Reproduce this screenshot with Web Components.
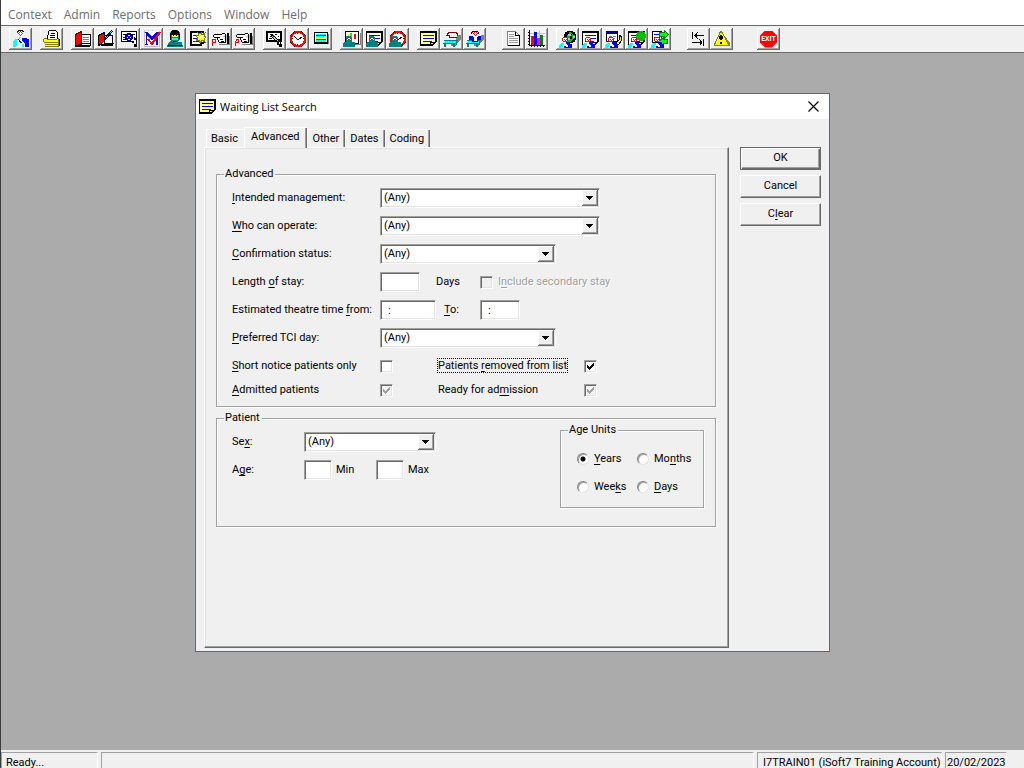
<!DOCTYPE html>
<html lang="en">
<head>
<meta charset="utf-8">
<title>Waiting List Search</title>
<style>
html, body { height: 100%; }
body { margin: 0; overflow: hidden; background: #ababab; }
</style>
</head>
<body>
<pas-app></pas-app>

<script>
// "_Intended" -> the letter after the underscore is the access key
function mnemonic(text) {
  return (text || "").replace(/_(.)/, "<u>$1</u>")
}

const base = /*css*/`
* { box-sizing: border-box; }
[hidden] { display: none; }
u { text-underline-offset: 2px; text-decoration-thickness: 1px; }
label, legend { white-space: nowrap; }
input, select, button { font: inherit; color: inherit; margin: 0; border-radius: 0; }
input[type=text], .combo {
  height: 20px;
  background: #fff;
  border: 1px solid;
  border-color: #a0a0a0 #fff #fff #a0a0a0;
  box-shadow: inset 1px 1px #696969, inset -1px -1px #e3e3e3;
  padding: 0 4px;
  outline: 0;
}
.combo { position: relative; display: block; padding: 0; }
.combo select {
  appearance: none;
  width: 100%;
  height: 18px;
  padding: 0 20px 0 3px;
  border: 0;
  background: none;
  outline: 0;
}
.combo svg {
  position: absolute;
  top: 1px;
  right: 1px;
  width: 16px;
  height: 16px;
  background: #f0f0f0;
  box-shadow: inset -1px -1px #696969, inset 1px 1px #fff, inset -2px -2px #a0a0a0;
  pointer-events: none;
}
input[type=checkbox] {
  appearance: none;
  flex: none;
  width: 13px;
  height: 13px;
  background: #fff;
  border: 1px solid;
  border-color: #a0a0a0 #fff #fff #a0a0a0;
  box-shadow: inset 1px 1px #696969, inset -1px -1px #e3e3e3;
}
.tick { position: relative; display: flex; color: #000; }
.tick svg { position: absolute; top: 3px; left: 3px; display: none; pointer-events: none; }
.tick input:checked + svg { display: block; }
.tick.grey { color: #a0a0a0; }
.tick.grey input { background: #f4f4f4; }
`

const tickSvg = `<svg width="7" height="7" viewBox="0 0 7 7" shape-rendering="crispEdges"><path fill="currentColor" d="M0 2h1v1h1v1h1v-1h1v-1h1v-1h1v-1h1v3h-1v1h-1v1h-1v1h-1v1h-1v-1h-1v-1h-1z"/></svg>`

/* ---------- toolbar pictures, 18 x 18 ---------- */

const person = `<path fill="#fff" d="M5 4h5v5H5z"/><path fill="#f00" d="M5 3h1v1h-1zM7 3h1v1h-1zM9 3h1v1h-1zM4 4h1v1h-1zM6 4h1v1h-1zM8 4h1v1h-1zM5 5h1v1h-1zM9 5h1v1h-1zM6 6h1v1h-1zM8 6h1v1h-1zM7 7h1v1h-1z"/>`
const miniPerson = `<g transform="translate(0 7)"><path fill="#0ff" d="M2 6h3v1l-2 4H0V9z"/><path fill="#00f" d="M8 5h3v2h2v4H8V8H6V6z"/><path fill="#fff" d="M5 6h2l2 3-2 2H4z"/><path fill="#00f" d="M6 8l2 3H5z"/><path fill="#fff" d="M4 1h4v4H4z"/><path fill="#f00" d="M4 0h4v1H4zM3 1h1v3H3zM8 1h1v3H8zM4 4h4v1H4zM5 2h1v1H5zM7 2h1v1H7zM6 3h1v1H6z"/></g>`
const bust = `<g transform="translate(0 6)"><path fill="#008080" d="M3 0h5v1h1v5h2l1 1v4H0V7l1-1h2z"/><path fill="#fff" d="M4 2h4v2H4z"/><path fill="#f00" d="M4 2h1v1H4zM7 2h1v1H7zM5 3h2v1H5z"/></g>`
const note = `<path fill="#fff" d="M1 2h15v10l-3 3H1z"/><path d="M0 1h17v11h-2V3H1v11h9v2H0zM10 12h6v1h-1v1h-1v1h-1v1h-3z"/><path fill="#fff" d="M11 13h2v1h-2z"/><path fill="#00f" d="M3 5h11v1H3zM3 8h11v1H3zM3 11h9v1H3z"/>`
const clock = `<circle cx="9" cy="9" r="7" fill="#fff" stroke="#000" stroke-width="3"/><circle cx="9" cy="9" r="7" fill="#fff" stroke="#f00" stroke-width="2"/><path stroke="#000" fill="none" d="M5 6l4 4 4-3"/><path d="M8 3h1v1H8zM8 14h1v1H8zM3 8h1v1H3zM14 8h1v1h-1z"/>`
const bed = `<path fill="#808080" d="M7 15l5-4 3-6h3v4l-4 5-2 3z"/><path fill="#0ff" d="M2 11h12l-2 3H1z"/><path fill="#008080" d="M1 10h14v1H1zM0 13h12v1H0zM1 14h2v3H1zM10 14h2v3h-2zM13 11h1v4h-1z"/>`
const hand = `<path fill="#808080" d="M7 14h10v1H7zM17 6h1v9h-1z"/><path fill="#fff" d="M2 5h10v8H7L5 8H2z"/><path d="M2 4h8v1H2zM1 5h1v2H1zM2 7h6v1H2zM5 8h1v2H5zM6 10h1v2H6zM7 12h6v1H7zM10 3h3v1h-3zM13 4h1v9h-1zM8 9h3v1H8zM9 11h3v1H9zM15 3h2v11h-2z"/><path fill="#c0c0c0" d="M11 6h2v1h-2zM14 5h1v7h-1z"/>`

const icons = {
  doctor: `<path fill="#0ff" d="M3 9h3v3l-2 5H1v-5z"/><path fill="#00f" d="M10 8h5v1h2v8h-4v-4l-3-2z"/><path fill="#fff" d="M5 10h5l3 4v3H5z"/><path fill="#00f" d="M6 9l4 3-1 2zM14 12h1v5h-1z"/><path fill="#000" d="M6 0h5v1H6zM5 1h1v1H5zM11 1h1v1h-1z"/><g transform="translate(1 -2)">${person}</g><path fill="#0ff" d="M7 7h1v2H7zM10 14h2v3h-2z"/>`,
  tray: `<path fill="#fff" d="M5 1h9v9H4z"/><path d="M6 0h7v1H6zM5 1h1v4H5zM13 1h1v1h-1zM14 2h1v7h-1zM4 5h1v4H4zM8 3h4v1H8zM7 5h5v1H7zM7 7h5v1H7z"/><path fill="#ff0" d="M1 9h15v7H2z"/><path fill="#808000" d="M1 8h3v1H1zM0 9h1v3H0zM4 9h10v1H4zM1 12h14v1H1zM2 14h13v1H2zM2 16h14v1H2zM15 8h1v9h-1z"/><path d="M16 9h1v7h-1z"/>`,
  book: `<path fill="#fff" stroke="#000" d="M4.500 4.500h12v11h-12z"/><path stroke="#808080" d="M9 7.500h6M9 9.500h6M9 11.500h6"/><path fill="#f00" stroke="#800000" d="M1.500 4.500l6-3v12l-6 3z"/><path d="M1 15h3l4-2h8v1H9l-3 2h10v1H1z"/>`,
  bookPen: `<path fill="#fff" stroke="#000" d="M6.500 5.500h9v9h-9z"/><path fill="#f00" stroke="#000" d="M1.500 5.500l6-3v10l-6 3z"/><path d="M3 16l5-3h9l-1 3H4z"/><path fill="#0ff" stroke="#000080" d="M14.500.500l1 1-6 7-1 1v-2z"/><path fill="#fff" d="M4 14l3-2v2zM11 11h4v1h-4z"/>`,
  inspect: `<path fill="#fff" stroke="#000" d="M1.500 1.500h15v10h-15z"/><path d="M3 4h3v1H3zM12 4h3v1h-3zM3 7h2v1H3zM3 9h3v1H3z"/><circle cx="9" cy="7" r="4" fill="#000080"/><path fill="#00f" d="M6 6h6v2H6z"/><path fill="#fff" d="M8 5h2v1H8zM7 7h1v1H7zM10 7h1v1h-1zM8 9h2v1H8z"/><path d="M10 12l4 1v4h3V9l-3-2v4z"/><path fill="#fff" d="M14 10h2v4h-2z"/>`,
  check: `<path fill="#fff" d="M1 1h16v15H1z"/><path fill="#c0c0c0" d="M1 0h1v16H1zM5 0h1v1H5zM9 0h1v1H9zM1 16h16v1H1zM16 1h1v16h-1z"/><path fill="#00f" d="M2 2h3l4 5 4-5h2v13h-2V6l-4 5-5-5v8h1v1H2v-1h1V3H2z"/><path fill="none" stroke="#f00" stroke-width="2" d="M5 9l4 5 8-12"/>`,
  surgeon: `<path fill="#008080" d="M6 0h6l2 3v6l-2 2v1h4l1 5H1l1-4 3-2V9L4 7V3z"/><path d="M5 1h1V0h5v1h2v3h1v5h-1V5H5v5H4V3h1z"/><path fill="#ff0" d="M6 5h6v2H6z"/><path d="M7 5h1v1H7zM10 5h1v1h-1z"/><path fill="#0ff" d="M6 8h6v2H6z"/><path d="M7 11h4v1H7zM2 15h14v1H2z"/>`,
  newNote: `<path fill="#fff" d="M2 2h13v13H2z"/><path d="M1 1h14v2H3v11h8v2H1zM11 12h4v2h-2v2h-2zM14 9h2v4h-2z"/><path fill="#00f" d="M4 5h4v1H4zM4 8h4v1H4zM4 11h6v1H4z"/><path fill="#ff0" stroke="#808000" d="M12 2l1 3 3-2-1 3 2 1-2 2 1 3-3-2-2 3-1-3-3 1 2-3-2-2 3-1-1-2 3 1z"/><path fill="#fff" d="M11 6h3v2h-3z"/>`,
  handRed: `${hand}<path fill="#f00" d="M0 9h4v1H0zM0 9h1v7H0zM3 9h1v4H0v-1h3z"/>`,
  handRed2: `${hand}<path fill="#f00" d="M1 9h3v1H1zM1 10h1v1H1zM0 11h1v5H0zM3 10h1v3H1v-1h2z"/>`,
  cardPen: `<path fill="#fff" stroke="#000" stroke-width="2" d="M1 2h14v9H1z"/><path d="M4 4h2v1H4zM6 5h2v1H6zM3 8h3v1H3zM9 4h2v1H9zM12 6h1v1h-1z"/><path stroke="#000" stroke-width="3" d="M5 5l8 7"/><path stroke="#c0c0c0" d="M6 6l6 5"/><path d="M12 9h2v2h1v3h1v3h-3v-2h-2v-3h1z"/><path fill="#fff" d="M13 12h1v2h-1z"/>`,
  clock,
  screen: `<path d="M2 2h14v12H2z"/><path fill="#808080" d="M4 14h13V4h-1v10z"/><path fill="#fff" d="M3 3h12v9H3z"/><path fill="#0ff" d="M4 4h10v1H4z"/><path fill="#00f" d="M4 5h10v1H4z"/><path fill="#0ff" d="M4 6h10v1H4z"/><path fill="#ff0" d="M4 7h10v2H4z"/><path fill="#f00" d="M4 9h10v1H4z"/><path fill="#0ff" d="M4 10h10v2H4z"/>`,
  bustChart: `<path fill="#fff" stroke="#000" d="M2.500 1.500h13v12h-13z"/><path fill="#808080" d="M4 14h13V3h1v12H4z"/><path fill="#ff0" d="M5 4h2v5H5z"/><path fill="#0f0" d="M7 3h2v6H7z"/><path fill="#f00" d="M11 4h2v5h-2z"/><path fill="#008080" d="M5 8h3v1H5z"/>${bust}`,
  bustNote: `${note}${bust}`,
  bustClock: `${clock}${bust}`,
  yellowNote: `<path fill="#ff9" d="M1 2h15v10l-4 3H1z"/><path d="M0 1h17v11h-2V3H1v11h9v2H0zM10 12h6v1h-1v1h-1v1h-1v1h-3z"/><path fill="#ff0" d="M11 13h2v1h-2z"/><path fill="#00f" d="M3 5h11v1H3zM3 8h11v1H3zM3 11h9v1H3z"/>`,
  bed: `${bed}<path fill="none" stroke="#800000" d="M4 6V3.500h1v-1h8v1h1V6M3 5.500h3v2h8"/>`,
  bedPerson: `${bed}<path fill="#00f" d="M3 6h4l2 3 2-3h4v4h-3v2H6v-2H3z"/><path fill="#fff" d="M8 7h3v4H8z"/><g transform="translate(2 -2)">${person}</g><path fill="#000080" d="M6 1h6v1H6zM5 2h1v2H5zM12 2h1v2h-1z"/>`,
  page: `<path fill="#fff" stroke="#808080" d="M2.500 1.500h8l4 4v10h-12z"/><path stroke="#000" fill="none" d="M10.500 1.500v4h4v10h-12"/><path stroke="#a0a0a0" d="M4 4.500h5M4 6.500h5M4 8.500h9M4 10.500h9M4 12.500h9"/>`,
  chart: `<path fill="#fff" d="M2 1h15v14H2z"/><path stroke="#c0c0c0" d="M2 3.500h15M2 6.500h15M6.500 1v14M11.500 1v14"/><path fill="#f00" d="M3 6h3v9H3z"/><path fill="#00f" d="M6 2h3v13H6z"/><path fill="#f0f" d="M9 8h3v7H9z"/><path fill="#008000" d="M12 5h3v10h-3z"/><path d="M1 0h1v15h15v1h-1v1h-1v-1h-2v1h-1v-1h-2v1H9v-1H7v1H6v-1H4v1H3v-1H1v-1H0v-1h1v-2H0v-1h1V9H0V8h1V6H0V5h1V3H0V2h1z"/>`,
  globe: `<circle cx="11" cy="7" r="6" fill="#00c000" stroke="#000"/><path d="M7 2h3v3H8v2H6zM12 2h3l2 3h-3zM11 6h2v3h-2zM14 9h2l-2 3h-2z"/><path fill="#c0c0c0" d="M9 4h3v2H9zM14 6h2v2h-2zM8 8h3v2H8z"/><path fill="#00f" d="M12 4h1v1h-1zM15 8h1v1h-1z"/>${miniPerson}`,
  personNote: `${note}${miniPerson}`,
  personPen: `<path fill="#fff" stroke="#000" d="M1.500 1.500h11v10h-11z"/><path fill="#000080" d="M1 1h12v3H1z"/><path stroke="#808080" d="M4 6.500h3M8 6.500h3M7 8.500h3"/><path fill="#ff0" stroke="#000" d="M14.500 5.500l2 1v4l-3 4-3 1 1-3 3-3z"/>${miniPerson}`,
  personGlobe: `${note}<circle cx="13" cy="6" r="5" fill="#00c000"/><path fill="#008000" d="M10 2h1v1h-1zM13 2h1v1h-1zM9 5h1v1H9zM12 5h1v1h-1zM15 5h1v1h-1zM10 8h1v1h-1zM13 8h1v1h-1zM15 3h1v1h-1z"/>${miniPerson}`,
  personSwap: `<path fill="#fff" stroke="#000" d="M1.500 1.500h9v11h-9z"/><path fill="#00f" d="M3 4h5v1H3zM3 7h6v1H3z"/><path fill="#0f0" stroke="#008000" d="M8.500 2.500h5v-2l4 4-4 4v-2h-5zM16.500 9.500h-4v-2l-5 4 5 4v-2h4z"/>${miniPerson}`,
  tabs: `<path d="M2 2h1v7H2zM4 5h10v1H4zM5 4h1v3H5zM6 3h1v5H6zM7 2h1v1H7zM7 8h1v1H7zM13 9h1v7h-1zM2 12h10v1H2zM11 11h1v3h-1zM10 10h1v5h-1zM9 9h1v1H9z"/>`,
  warning: `<path fill="#808080" d="M3 16h14v-3L12 6z"/><path fill="#ff0" stroke="#808000" d="M7.500 1.500h1l7 13v1h-14v-1z"/><path d="M7 5h2v5H7zM6 6h4v3H6zM7 12h2v2H7z"/>`
}

const define = (tag, css, html, setup) => {
  customElements.define(tag, class extends HTMLElement {
    constructor() {
      super()
      this.attachShadow({ mode: "open" })
    }
    connectedCallback() {
      const markup = typeof html === "function" ? html(this) : html
      this.shadowRoot.innerHTML = `<style>${base}${css}</style>${markup}`
      if (setup) setup(this)
    }
  })
}

define("menu-bar", /*css*/`
:host { display: block; background: #fff; color: #6d6d6d; font: 12px/16px "Open Sans", sans-serif; }
nav { display: flex; gap: 12px; height: 25px; padding: 7px 7px 2px; }
a { color: inherit; text-decoration: none; }
`, el => `<nav>${el.getAttribute("items").split(",").map(t => `<a href="#">${t}</a>`).join("")}</nav>`)

define("tool-button", /*css*/`
:host { display: block; width: 23px; height: 22px; }
button {
  display: grid;
  place-items: center;
  width: 100%;
  height: 100%;
  padding: 0;
  border: 0;
  background: #f0f0f0;
  box-shadow: inset -1px -1px #696969, inset 1px 1px #fff, inset -2px -2px #a0a0a0;
}
.exit { background: #f00; color: #fff; width: 17px; height: 17px; line-height: 17px; font-size: 7px; font-weight: bold;
  clip-path: polygon(30% 0, 70% 0, 100% 30%, 100% 70%, 70% 100%, 30% 100%, 0 70%, 0 30%); }
`, el => {
  const name = el.getAttribute("icon")
  const pic = name === "exit" ? `<span class="exit">EXIT</span>`
    : `<svg width="18" height="18" viewBox="0 0 18 18" shape-rendering="crispEdges">${icons[name]}</svg>`
  return `<button type="button" aria-label="${name}">${pic}</button>`
})

define("tool-bar", /*css*/`
:host {
  display: flex;
  height: 28px;
  padding: 2px 8px;
  gap: 8px;
  background: #f0f0f0;
  border: solid #696969;
  border-width: 1px 0;
}
div { display: flex; }
`, () => [
  "doctor", "tray",
  "book bookPen inspect check surgeon newNote handRed handRed2",
  "cardPen clock screen", "bustChart bustNote bustClock",
  "yellowNote bed bedPerson", "", "page chart",
  "globe personNote personPen personGlobe personSwap",
  "", "tabs warning", "", "", "exit"
].map(g => `<div>${g.split(" ").filter(Boolean).map(n => `<tool-button icon="${n}"></tool-button>`).join("")}</div>`).join(""))

define("app-window", /*css*/`
:host { display: block; background: #f0f0f0; border: 1px solid #1979ca; }
header { display: flex; align-items: center; height: 25px; padding: 0 10px 0 3px; background: #fff; color: #000; font: 11px/16px "Open Sans", sans-serif; }
h1 { flex: 1; margin: 0 0 0 3px; font: inherit; }
header button { display: flex; padding: 0; border: 0; background: none; }
`, el => `
<header>
  <svg width="18" height="18" viewBox="0 0 18 18" shape-rendering="crispEdges">${icons.yellowNote}</svg>
  <h1>${el.getAttribute("caption")}</h1>
  <button type="button" aria-label="Close"><svg width="11" height="11" viewBox="0 0 11 11"><path stroke="#000" stroke-width="1.200" d="M.500.500l10 10M10.500.500l-10 10"/></svg></button>
</header>
<slot></slot>`)

define("tab-sheet", /*css*/`
:host { display: flex; flex-direction: column; }
nav { display: flex; align-items: flex-end; height: 20px; padding-left: 2px; }
button {
  height: 18px;
  padding: 1px 6px 0 5px;
  border: 0;
  background: #f0f0f0;
  box-shadow: inset 1px 1px #fff, inset -1px 0 #696969, inset -2px 0 #a0a0a0;
  line-height: 17px;
}
button:first-child { box-shadow: inset 1px 1px #fff; }
button[aria-selected=true] { position: relative; height: 21px; margin: 0 0 -1px; padding: 0 8px 2px 7px; }
section {
  flex: 1;
  padding: 19px 12px 12px 11px;
  border: 1px solid;
  border-color: #fff #696969 #696969 #fff;
  box-shadow: inset -1px -1px #a0a0a0, inset 1px 1px #e3e3e3;
}
`, el => `
<nav role="tablist">${el.getAttribute("tabs").split(",").map(t =>
  `<button type="button" role="tab" aria-selected="${t === el.getAttribute("current")}">${t}</button>`).join("")}</nav>
<section role="tabpanel"><slot></slot></section>`,
el => {
  const tabs = el.shadowRoot.querySelectorAll("[role=tab]")
  tabs.forEach(tab => tab.addEventListener("click", () =>
    tabs.forEach(t => t.setAttribute("aria-selected", t === tab))))
})

define("group-box", /*css*/`
:host { display: block; }
fieldset { min-width: 0; height: 100%; margin: 0; padding: 7px 15px 6px; border: 1px solid #a0a0a0; box-shadow: 1px 1px #fff, inset 1px 1px #fff; }
legend { height: 14px; margin-left: -8px; padding: 0 2px 0 1px; background: #f0f0f0; line-height: 14px; }
:host([compact]) fieldset { padding: 12px 9px 10px 16px; }
:host([compact]) legend { margin-left: -9px; }
`, el => `<fieldset><legend>${el.getAttribute("caption")}</legend><slot></slot></fieldset>`)

define("pick-field", /*css*/`
:host { display: flex; align-items: center; height: 20px; }
label { width: var(--label, 148px); }
.combo { width: var(--field, 220px); }
`, el => `
<label for="f">${mnemonic(el.getAttribute("label"))}</label>
<span class="combo"><select id="f"><option>(Any)</option></select>
<svg viewBox="0 0 16 16" shape-rendering="crispEdges"><path d="M4 6h7v1h-1v1H9v1H8v1H7V9H6V8H5V7H4z"/></svg></span>`)

define("text-field", /*css*/`
:host { display: flex; align-items: center; height: 20px; }
label { width: var(--label, 148px); }
input[type=text] { width: var(--field, 40px); padding-left: 7px; }
span { margin-left: var(--unit-gap, 4px); white-space: nowrap; }
`, el => {
  const label = el.getAttribute("label"), unit = el.getAttribute("unit")
  const box = `<input type="text" id="f" value="${el.getAttribute("value") || ""}">`
  if (!label) return `${box}<span><label for="f">${unit}</label></span>`
  return `<label for="f">${mnemonic(label)}</label>${box}${unit ? `<span>${unit}</span>` : ""}`
})

define("check-field", /*css*/`
:host { display: flex; align-items: center; height: 20px; }
label { width: var(--label, 148px); }
.lead { order: 1; width: auto; margin-left: 5px; color: #a0a0a0; text-shadow: 1px 1px #fff; }
i { font-style: normal; }
.focus i { outline: 1px dotted #000; }
.tick.off input { background: #f0f0f0; }
`, el => {
  const has = n => el.hasAttribute(n)
  return `
<label for="f" class="${has("lead") ? "lead" : ""} ${has("focused") ? "focus" : ""}"><i>${mnemonic(el.getAttribute("label"))}</i></label>
<span class="tick ${has("grey") ? "grey" : ""} ${has("lead") ? "off" : ""}"><input type="checkbox" id="f" ${has("checked") ? "checked" : ""} ${has("lead") ? "disabled" : ""}>${tickSvg}</span>`
})

define("age-units", /*css*/`
:host { display: grid; grid-template-columns: 60px auto; gap: 8px 0; }
div { display: flex; align-items: center; gap: 5px; height: 20px; }
input {
  appearance: none;
  width: 12px;
  height: 12px;
  border-radius: 50%;
  border: 1px solid;
  border-color: #808080 #e3e3e3 #e3e3e3 #808080;
  background: #fff;
  box-shadow: inset 1px 1px #a0a0a0;
}
input:checked { background: radial-gradient(circle at 50% 50%, #000 2px, #fff 3px); }
`, () => ["_Years", "Mo_nths", "Wee_ks", "_Days"].map((t, i) =>
  `<div><input type="radio" name="unit" id="u${i}" ${i ? "" : "checked"}><label for="u${i}">${mnemonic(t)}</label></div>`).join(""))

define("push-button", /*css*/`
:host { display: block; }
button {
  width: 100%;
  height: 23px;
  padding: 0 0 1px;
  border: 1px solid;
  border-color: #fff #696969 #696969 #fff;
  background: #f0f0f0;
  box-shadow: inset -1px -1px #a0a0a0;
  line-height: 14px;
}
:host([default]) button { border-color: #696969; box-shadow: inset 1px 1px #fff, inset -1px -1px #696969, inset -2px -2px #a0a0a0; }
`, el => `<button type="button">${mnemonic(el.getAttribute("label"))}</button>`)

define("search-form", /*css*/`
:host { display: flex; gap: 11px; height: 532px; padding: 8px 8px 3px; }
tab-sheet { flex: 1; }
aside { display: flex; flex-direction: column; gap: 5px; width: 81px; padding-top: 20px; }
.rows { display: flex; flex-direction: column; gap: 8px; }
.pair { display: flex; }
.narrow { --field: 176px; }
.half { width: 206px; }
.right { --label: 146px; }
.tight { margin-top: -4px; }
.stay { --unit-gap: 16px; width: 248px; }
.from { --field: 56px; width: 212px; }
.to { --label: 36px; }
.patient { margin-top: 4px; }
.patient .rows { --label: 72px; --field: 132px; }
.patient .cols { display: flex; justify-content: space-between; height: 88px; }
.age { --field: 28px; width: 144px; }
.units { width: 144px; height: 85px; margin: -9px -4px 0 0; }
`, /*html*/`
<tab-sheet tabs="Basic,Advanced,Other,Dates,Coding" current="Advanced">
  <group-box caption="Advanced">
    <div class="rows">
      <pick-field label="_Intended management:"></pick-field>
      <pick-field label="_Who can operate:"></pick-field>
      <pick-field class="narrow" label="_Confirmation status:"></pick-field>
      <div class="pair">
        <text-field class="stay" label="Length _of stay:" unit="Days"></text-field>
        <check-field lead label="I_nclude secondary stay"></check-field>
      </div>
      <div class="pair">
        <text-field class="from" label="Estimated theatre time _from:" value=":"></text-field>
        <text-field class="to" label="_To:" value=":"></text-field>
      </div>
      <pick-field class="narrow" label="_Preferred TCI day:"></pick-field>
      <div class="pair">
        <check-field class="half" label="_Short notice patients only"></check-field>
        <check-field class="right" focused checked label="Patients _removed from list"></check-field>
      </div>
      <div class="pair tight">
        <check-field class="half" grey checked label="_Admitted patients"></check-field>
        <check-field class="right" grey checked label="Ready for ad_mission"></check-field>
      </div>
    </div>
  </group-box>
  <group-box class="patient" caption="Patient">
    <div class="cols">
      <div class="rows">
        <pick-field label="Se_x:"></pick-field>
        <div class="pair">
          <text-field class="age" label="A_ge:" unit="Min"></text-field>
          <text-field class="age" unit="Max"></text-field>
        </div>
      </div>
      <group-box class="units" compact caption="Age Units"><age-units></age-units></group-box>
    </div>
  </group-box>
</tab-sheet>
<aside>
  <push-button default label="OK"></push-button>
  <push-button label="Cancel"></push-button>
  <push-button label="C_lear"></push-button>
</aside>`)

define("status-bar", /*css*/`
:host { display: block; height: 18px; overflow: hidden; background: #f0f0f0; }
div { display: flex; gap: 3px; padding: 2px 17px 0 0; }
span { flex: none; height: 22px; padding: 3px 4px 0; border: 1px solid; border-color: #a0a0a0 #fff #fff #a0a0a0; line-height: 14px; white-space: nowrap; }
.ready { width: 97px; }
.fill { flex: 1; }
.user { width: 185px; padding-left: 5px; }
.date { width: 62px; padding: 3px 1px 0; }
`, /*html*/`<div><span class="ready">Ready...</span><span class="fill"></span><span class="user">I7TRAIN01 (iSoft7 Training Account)</span><span class="date">20/02/2023</span></div>`)

define("pas-app", /*css*/`
:host {
  display: flex;
  flex-direction: column;
  height: 100vh;
  border-left: 1px solid #3c3c3c;
  color: #000;
  font: 11px/14px Roboto, "Liberation Sans", sans-serif;
}
main { position: relative; flex: 1; background: #ababab; }
app-window { position: absolute; left: 194px; top: 40px; width: 635px; }
`, /*html*/`
<menu-bar items="Context,Admin,Reports,Options,Window,Help"></menu-bar>
<tool-bar></tool-bar>
<main>
  <app-window caption="Waiting List Search"><search-form></search-form></app-window>
</main>
<status-bar></status-bar>`)
</script>
</body>
</html>
